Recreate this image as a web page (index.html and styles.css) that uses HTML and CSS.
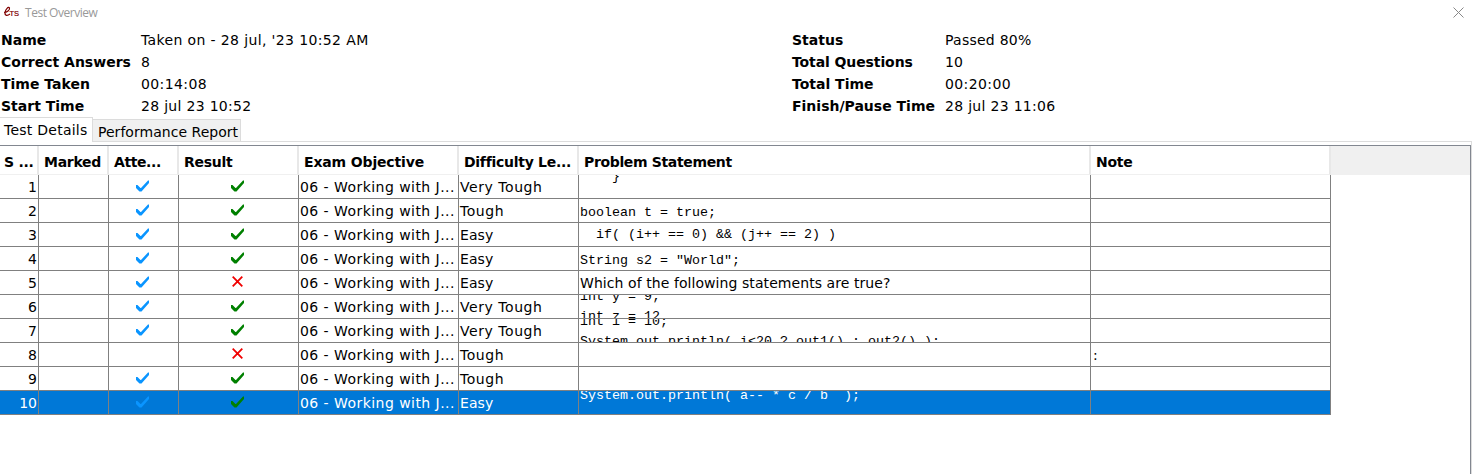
FILE: index.html
```html
<!DOCTYPE html>
<html lang="en">
<head>
<meta charset="utf-8">
<title>Test Overview</title>
<link rel="stylesheet" href="styles.css">
</head>
<body>
<svg class="defs" aria-hidden="true">
  <symbol id="tick" viewBox="0 0 13 12"><path d="M0 5h1.500L4.500 8h.5L12 .5h1V3L5.500 11.500H3.500L0 8z"/></symbol>
  <symbol id="cross" viewBox="0 0 11 11"><path d="M.7.7l9.600 9.600M10.300.7L.7 10.300" fill="none" stroke="currentColor" stroke-width="1.800"/></symbol>
</svg>
<header class="titlebar">
  <svg class="logo" viewBox="0 0 17 12"><path d="M1 6.500C4 6.500 7 4 6.500 2C5.500 0 2.500 3.500 2 6.500C1.700 10 4.500 10 7 8" fill="none" stroke="currentColor" stroke-width="1.200"/><text x="6.500" y="10">TS</text></svg>
  <span class="title">Test Overview</span>
  <svg class="close" viewBox="0 0 11 11"><path d="M.5.5l10 10M10.500.5l-10 10"/></svg>
</header>
<section class="summary">
  <dl class="left">
    <dt>Name</dt><dd class="v-name">Taken on - 28 jul, '23 10:52 AM</dd>
    <dt>Correct Answers</dt><dd>8</dd>
    <dt>Time Taken</dt><dd class="v-time">00:14:08</dd>
    <dt>Start Time</dt><dd class="v-date">28 jul 23 10:52</dd>
  </dl>
  <dl class="right">
    <dt>Status</dt><dd class="v-status">Passed 80%</dd>
    <dt class="k-questions">Total Questions</dt><dd>10</dd>
    <dt>Total Time</dt><dd class="v-time">00:20:00</dd>
    <dt>Finish/Pause Time</dt><dd class="v-date">28 jul 23 11:06</dd>
  </dl>
</section>
<nav class="tabs"><span class="tab active">Test Details</span><span class="tab">Performance Report</span></nav>
<main class="pane">
  <div class="table">
    <div class="row head"><div>S ...</div><div>Marked</div><div class="h-att">Atte...</div><div>Result</div><div class="h-obj">Exam Objective</div><div>Difficulty Le...</div><div class="h-prob">Problem Statement</div><div>Note</div></div>
    <div class="row"><div class="num">1</div><div></div><div class="mark"><svg class="tick blue"><use href="#tick"/></svg></div><div class="mark"><svg class="tick green"><use href="#tick"/></svg></div><div class="obj">06 - Working with J...</div><div class="vt">Very Tough</div><div class="code"><pre class="up8">    }</pre></div><div></div></div>
    <div class="row"><div class="num">2</div><div></div><div class="mark"><svg class="tick blue"><use href="#tick"/></svg></div><div class="mark"><svg class="tick green"><use href="#tick"/></svg></div><div class="obj">06 - Working with J...</div><div class="vt">Tough</div><div class="code"><pre class="down4">boolean t = true;</pre></div><div></div></div>
    <div class="row"><div class="num">3</div><div></div><div class="mark"><svg class="tick blue"><use href="#tick"/></svg></div><div class="mark"><svg class="tick green"><use href="#tick"/></svg></div><div class="obj">06 - Working with J...</div><div class="easy">Easy</div><div class="code"><pre class="down2">  if( (i++ == 0) &amp;&amp; (j++ == 2) )</pre></div><div></div></div>
    <div class="row"><div class="num">4</div><div></div><div class="mark"><svg class="tick blue"><use href="#tick"/></svg></div><div class="mark"><svg class="tick green"><use href="#tick"/></svg></div><div class="obj">06 - Working with J...</div><div class="easy">Easy</div><div class="code"><pre class="down4">String s2 = "World";</pre></div><div></div></div>
    <div class="row"><div class="num">5</div><div></div><div class="mark"><svg class="tick blue"><use href="#tick"/></svg></div><div class="mark"><svg class="cross"><use href="#cross"/></svg></div><div class="obj">06 - Working with J...</div><div class="easy">Easy</div><div class="which">Which of the following statements are true?</div><div></div></div>
    <div class="row"><div class="num">6</div><div></div><div class="mark"><svg class="tick blue"><use href="#tick"/></svg></div><div class="mark"><svg class="tick green"><use href="#tick"/></svg></div><div class="obj">06 - Working with J...</div><div class="vt">Very Tough</div><div class="code"><pre class="up8">int y = 9;
int z = 12</pre></div><div></div></div>
    <div class="row"><div class="num">7</div><div></div><div class="mark"><svg class="tick blue"><use href="#tick"/></svg></div><div class="mark"><svg class="tick green"><use href="#tick"/></svg></div><div class="obj">06 - Working with J...</div><div class="vt">Very Tough</div><div class="code"><pre class="up7">int i = 10;
System.out.println( i&lt;20 ? out1() : out2() );</pre></div><div></div></div>
    <div class="row"><div class="num">8</div><div></div><div></div><div class="mark"><svg class="cross"><use href="#cross"/></svg></div><div class="obj">06 - Working with J...</div><div class="vt">Tough</div><div></div><div class="note">:</div></div>
    <div class="row"><div class="num">9</div><div></div><div class="mark"><svg class="tick blue"><use href="#tick"/></svg></div><div class="mark"><svg class="tick green"><use href="#tick"/></svg></div><div class="obj">06 - Working with J...</div><div class="vt">Tough</div><div></div><div></div></div>
    <div class="row selected"><div class="num">10</div><div></div><div class="mark"><svg class="tick blue"><use href="#tick"/></svg></div><div class="mark"><svg class="tick green"><use href="#tick"/></svg></div><div class="obj">06 - Working with J...</div><div class="easy">Easy</div><div class="code"><pre class="up5">System.out.println( a-- * c / b  );</pre></div><div></div></div>
  </div>
</main>
</body>
</html>
```
FILE: styles.css
```css
* { box-sizing: border-box; }
body { margin: 0; height: 474px; overflow: hidden; display: flex; flex-direction: column; background: #fff; color: #000; font: 14px/22px Verdana, "DejaVu Sans", sans-serif; }
.defs { display: none; }
.titlebar { flex: none; height: 29px; display: flex; align-items: flex-start; padding: 0 8px 0 3px; }
.logo { width: 17px; height: 12px; margin-top: 6px; color: #800000; }
.logo text { font: 7.5px "Liberation Sans", sans-serif; fill: currentColor; stroke: currentColor; stroke-width: .2px; }
.title { margin: 2px 0 0 5px; font: 12px/22px "Open Sans", sans-serif; letter-spacing: -.47px; color: #999; }
.close { width: 11px; height: 11px; margin: 7px 0 0 auto; fill: none; stroke: #888; }
.summary { flex: none; height: 88px; display: flex; }
.summary dl { margin: 0; display: grid; grid-auto-rows: 22px; white-space: nowrap; }
.left { width: 792px; padding-left: 1px; grid-template-columns: 140px 1fr; }
.right { grid-template-columns: 153px 1fr; }
dt { font-weight: bold; }
dd { margin: 0; }
.v-name { letter-spacing: .37px; }
.v-time { letter-spacing: .4px; }
.v-date { letter-spacing: .3px; }
.v-status { letter-spacing: .25px; }
.k-questions { letter-spacing: -.1px; }
.tabs { flex: none; height: 24px; display: flex; align-items: flex-end; white-space: nowrap; }
.tab { width: 148px; height: 22px; border: 1px solid #dcdcdc; border-left: 0; border-bottom: 0; background: #f0f0f0; padding-left: 5px; line-height: 24px; letter-spacing: .03px; }
.tab.active { width: 93px; height: 24px; background: #fff; padding-left: 4px; letter-spacing: .25px; position: relative; }
.tab.active::after { content: ""; position: absolute; left: 0; right: 0; bottom: -1px; height: 1px; background: #fff; }
.pane { flex: 1; border: solid #dcdcdc; border-width: 1px 1px 0 0; padding-top: 3px; }
.table { height: 100%; border: solid #828790; border-width: 1px 1px 0 0; }
.row { width: 1331px; height: 24px; display: grid; grid-template-columns: 39px 70px 70px 120px 160px 120px 512px 240px; white-space: nowrap; line-height: 24px; }
.row > div { border: solid #808080; border-width: 0 1px 1px 0; padding-left: 1px; overflow: hidden; min-width: 0; }
.row.head { width: 100%; height: 29px; background: #f0f0f0; font-weight: bold; line-height: 32px; letter-spacing: -.28px; }
.row.head > div { background: #fff; border-color: #f0f0f0; border-right: 2px solid #e8e8e8; padding-left: 5px; }
.row.head > div:first-child { padding-left: 4px; }
.row.head > .h-att { letter-spacing: -.4px; }
.row.head > .h-obj { letter-spacing: -.15px; }
.row.head > .h-prob { letter-spacing: -.35px; }
.row > .num { padding-right: 1px; text-align: right; }
.row > .mark { display: flex; justify-content: center; padding: 5px 2px 0 0; }
.obj { letter-spacing: .45px; }
.vt { letter-spacing: .55px; }
.easy { letter-spacing: .1px; }
.which { letter-spacing: .07px; }
.row > .note { padding-left: 2px; }
.tick { width: 13px; height: 12px; fill: currentColor; }
.blue { color: #0a95ff; }
.green { color: #008000; }
.cross { width: 11px; height: 11px; color: #f00000; }
pre { margin: 0; font: 13.333px/20px "Liberation Mono", monospace; }
.up8 { margin-top: -8px; }
.up7 { margin-top: -7px; }
.up5 { margin-top: -5px; }
.down2 { margin-top: 2px; }
.down4 { margin-top: 4px; }
.selected { background: #0078d7; color: #fff; }
```
